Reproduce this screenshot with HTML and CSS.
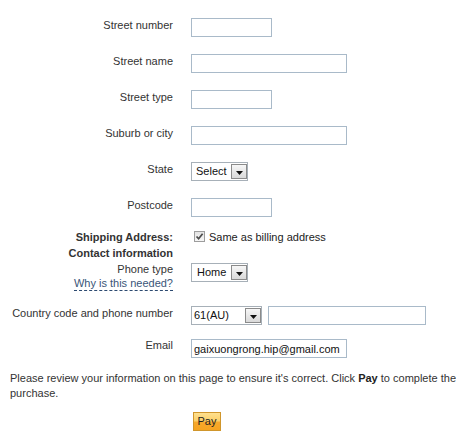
FILE: index.html
```html
<!DOCTYPE html>
<html>
<head>
<meta charset="utf-8">
<link rel="stylesheet" href="styles.css">
</head>
<body>
<div class="form">
  <div class="row gap16">
    <div class="lbl">Street number</div>
    <div class="ctl"><input class="in w81" type="text"></div>
  </div>
  <div class="row gap16">
    <div class="lbl">Street name</div>
    <div class="ctl"><input class="in w156" type="text"></div>
  </div>
  <div class="row gap16">
    <div class="lbl">Street type</div>
    <div class="ctl"><input class="in w81" type="text"></div>
  </div>
  <div class="row gap16">
    <div class="lbl">Suburb or city</div>
    <div class="ctl"><input class="in w156" type="text"></div>
  </div>
  <div class="row gap16">
    <div class="lbl">State</div>
    <div class="ctl">
      <div class="sel w57"><span class="sel-text">Select</span><span class="sel-btn"><svg width="7" height="4" viewBox="0 0 7 4"><path d="M0 0H7L3.5 4Z" fill="#111"/></svg></span></div>
    </div>
  </div>
  <div class="row gap12">
    <div class="lbl">Postcode</div>
    <div class="ctl"><input class="in w81" type="text"></div>
  </div>
  <div class="row line">
    <div class="lbl bold">Shipping Address:</div>
    <div class="ctl check-line">
      <span class="cb"><svg width="9" height="9" viewBox="0 0 9 9"><path d="M1.5 4.5L3.6 6.7L7.6 1.8" stroke="#4b4b4b" stroke-width="1.7" fill="none"/></svg></span>
      <span class="cb-text">Same as billing address</span>
    </div>
  </div>
  <div class="row line">
    <div class="lbl bold">Contact information</div>
    <div class="ctl"></div>
  </div>
  <div class="row phone">
    <div class="lbl">
      <div>Phone type</div>
      <div class="why-line"><span class="why">Why is this needed?</span></div>
    </div>
    <div class="ctl">
      <div class="sel w57 mt2"><span class="sel-text pl6">Home</span><span class="sel-btn"><svg width="7" height="4" viewBox="0 0 7 4"><path d="M0 0H7L3.5 4Z" fill="#111"/></svg></span></div>
    </div>
  </div>
  <div class="row country">
    <div class="lbl">Country code and phone number</div>
    <div class="ctl pair">
      <div class="sel w71"><span class="sel-text pl2">61(AU)</span><span class="sel-btn"><svg width="7" height="4" viewBox="0 0 7 4"><path d="M0 0H7L3.5 4Z" fill="#111"/></svg></span></div>
      <input class="in w158" type="text">
    </div>
  </div>
  <div class="row email">
    <div class="lbl">Email</div>
    <div class="ctl"><input class="in w156 mt2" type="text" value="gaixuongrong.hip@gmail.com"></div>
  </div>
</div>
<p class="note">Please review your information on this page to ensure it's correct. Click <b>Pay</b> to complete the purchase.</p>
<div class="actions"><button class="pay" type="button">Pay</button></div>
</body>
</html>
```

FILE: styles.css
```css
html, body {
  margin: 0;
  padding: 0;
  background: #fff;
}
body {
  font-family: "Liberation Sans", Arial, sans-serif;
  font-size: 11px;
  color: #333;
}
.form {
  padding-top: 17px;
}
.row {
  display: grid;
  grid-template-columns: 173px 1fr;
  column-gap: 18px;
  align-items: start;
  line-height: 16px;
}
.gap16 { height: 20px; margin-bottom: 16px; }
.gap12 { height: 20px; margin-bottom: 12px; }
.line { height: 16px; }
.phone { height: 44px; }
.country { height: 32px; }
.email { height: 34px; }
.lbl {
  text-align: right;
  white-space: nowrap;
}
.bold { font-weight: bold; }
.ctl { min-width: 0; }
.in {
  display: block;
  box-sizing: border-box;
  height: 19px;
  margin: 1px 0 0 0;
  padding: 0 2px;
  border: 1px solid #a9bac9;
  background: #fff;
  font-family: "Liberation Sans", Arial, sans-serif;
  font-size: 11px;
  color: #111;
  outline: none;
}
.mt2 { margin-top: 2px; }
.w81 { width: 81px; }
.w156 { width: 156px; }
.w158 { width: 158px; }
.w57 { width: 57px; }
.w71 { width: 71px; }
.sel {
  box-sizing: border-box;
  height: 19px;
  margin-top: 1px;
  border: 1px solid #a7b0b8;
  background: #fff;
  display: flex;
  align-items: stretch;
}
.sel.mt2 { margin-top: 2px; }
.sel-text {
  flex: 1;
  padding-left: 4px;
  line-height: 17px;
  color: #111;
  white-space: nowrap;
  overflow: hidden;
}
.pl6 { padding-left: 5px; }
.pl2 { padding-left: 2px; }
.sel-btn {
  box-sizing: border-box;
  width: 16px;
  margin: 1px 0;
  border: 1px solid #8b8b8b;
  background: linear-gradient(#f7f7f7, #d9d9d9);
  display: flex;
  align-items: center;
  justify-content: center;
  padding-top: 2px;
}
.sel-btn svg { display: block; }
.pair {
  display: flex;
  gap: 6px;
}
.check-line {
  display: flex;
  align-items: flex-start;
}
.cb {
  box-sizing: border-box;
  width: 11px;
  height: 11px;
  margin: 2px 0 0 3px;
  border: 1px solid #9d9d9d;
  background: linear-gradient(#e4e4e4, #f6f6f6);
  display: flex;
  align-items: center;
  justify-content: center;
}
.cb svg { display: block; }
.cb-text {
  margin-left: 4px;
  color: #222;
}
.why-line {
  line-height: 14px;
  margin-top: -1px;
}
.why {
  color: #3a5578;
  border-bottom: 1px dashed #2c4a70;
  padding-bottom: 1px;
}
.note {
  margin: 0;
  padding: 0 0 0 10px;
  line-height: 15px;
  color: #333;
}
.note b { color: #222; }
.actions {
  padding: 11px 0 0 193px;
}
.pay {
  box-sizing: border-box;
  height: 19px;
  width: 28px;
  padding: 0;
  border: 1px solid #d0962c;
  background: linear-gradient(#fee08f 0%, #fcd06a 45%, #f7a82c 55%, #f6a420 100%);
  font-family: "Liberation Sans", Arial, sans-serif;
  font-size: 11px;
  color: #222;
  line-height: 17px;
}
```
